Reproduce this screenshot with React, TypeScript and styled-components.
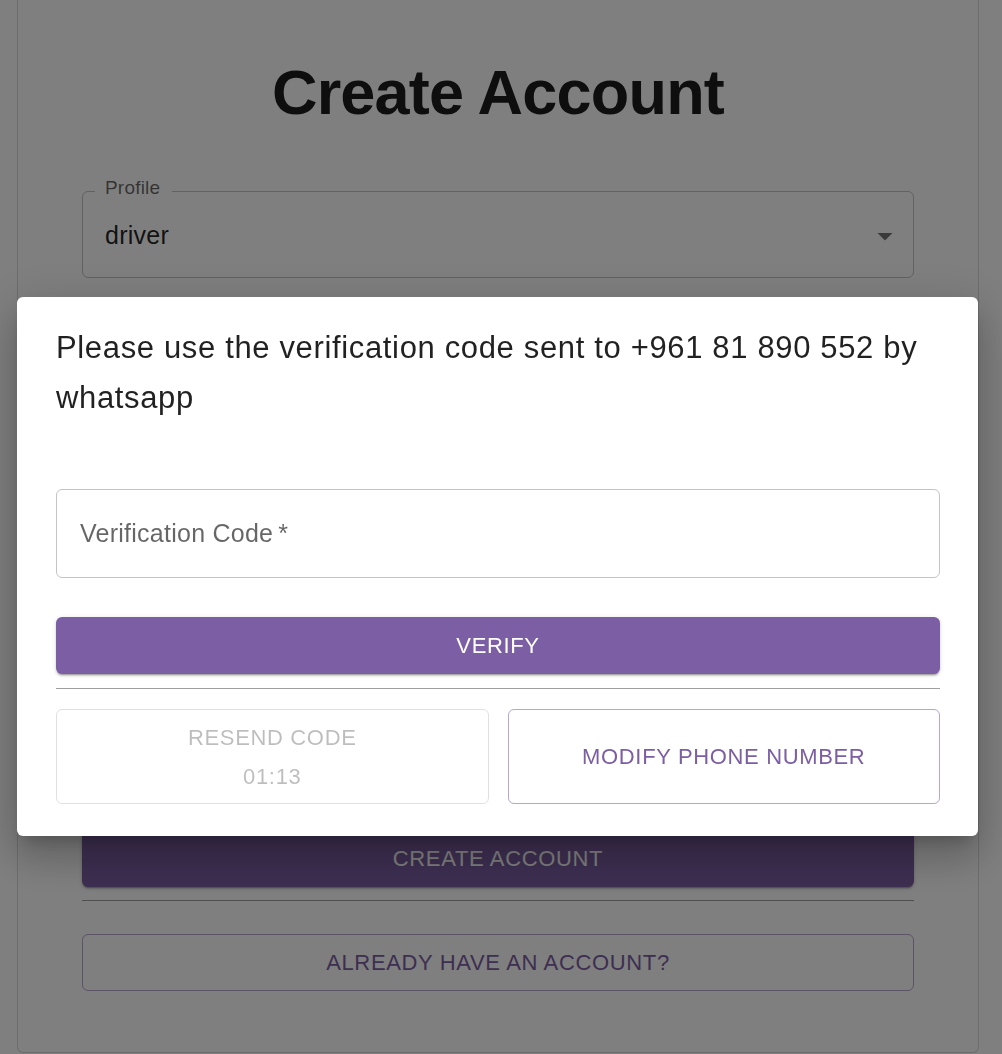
import React from "react";
import styled, { createGlobalStyle } from "styled-components";

const PURPLE = "#7b5ea3";

const GlobalStyle = createGlobalStyle`
  html, body {
    margin: 0;
    padding: 0;
    background: #ffffff;
    font-family: "Liberation Sans", Arial, Helvetica, sans-serif;
  }
  * { box-sizing: border-box; }
`;

const Page = styled.div`
  min-height: 100vh;
  padding-left: 17px;
  background: #ffffff;
`;

const Card = styled.main`
  width: 962px;
  background: #ffffff;
  border: 1px solid rgba(0, 0, 0, 0.14);
  border-top: none;
  border-radius: 0 0 6px 6px;
  padding: 55px 64px 61px;
  display: flex;
  flex-direction: column;
`;

const Title = styled.h1`
  margin: 0 0 49px;
  font-size: 63px;
  line-height: 74px;
  font-weight: 700;
  letter-spacing: -0.8px;
  text-align: center;
  color: #1c1c1c;
`;

const SelectBox = styled.fieldset`
  margin: 0;
  padding: 0 10px 0 12px;
  border: 1px solid rgba(0, 0, 0, 0.23);
  border-radius: 6px;
  min-width: 0;
`;

const SelectLegend = styled.legend`
  padding: 0 12px 6px 10px;
  font-size: 19px;
  line-height: 20px;
  letter-spacing: 0.2px;
  color: rgba(0, 0, 0, 0.6);
`;

const SelectRow = styled.div`
  height: 73px;
  padding: 0 0 10px 10px;
  display: flex;
  align-items: center;
  justify-content: space-between;
  font-size: 25px;
  letter-spacing: 0.25px;
  color: rgba(0, 0, 0, 0.87);
`;

const ArrowIcon = styled.svg`
  width: 36px;
  height: 36px;
  fill: rgba(0, 0, 0, 0.54);
`;

const OutlinedField = styled.div<{ $gap?: number }>`
  margin-top: ${(p) => p.$gap ?? 0}px;
  height: ${(p) => (p.$gap !== undefined ? 88 : 89)}px;
  border: 1px solid rgba(0, 0, 0, 0.23);
  border-radius: 6px;
  padding: 0 23px;
  display: flex;
  align-items: center;
  font-size: 25px;
  letter-spacing: 0.25px;
  color: rgba(0, 0, 0, 0.6);
`;

const Required = styled.span`
  margin-left: 5px;
`;

const ContainedButton = styled.button<{ $gap: number }>`
  margin-top: ${(p) => p.$gap}px;
  height: 57px;
  width: 100%;
  border: none;
  border-radius: 6px;
  background: ${PURPLE};
  color: #ffffff;
  font-family: inherit;
  font-size: 22px;
  letter-spacing: 0.65px;
  text-transform: uppercase;
  box-shadow: 0px 3px 1px -2px rgba(0, 0, 0, 0.2), 0px 2px 2px 0px rgba(0, 0, 0, 0.14),
    0px 1px 5px 0px rgba(0, 0, 0, 0.12);
  cursor: pointer;
`;

const Divider = styled.hr<{ $gap: number }>`
  margin: ${(p) => p.$gap}px 0 0;
  border: none;
  border-top: 1px solid #9e9e9e;
  height: 0;
  width: 100%;
`;

const OutlinedButton = styled.button<{ $gap?: number; $disabled?: boolean }>`
  margin-top: ${(p) => p.$gap ?? 0}px;
  width: 100%;
  min-height: 57px;
  padding: 7.5px 22px;
  border-radius: 6px;
  background: transparent;
  font-family: inherit;
  font-size: 22px;
  line-height: 39px;
  letter-spacing: 0.65px;
  text-transform: uppercase;
  display: flex;
  flex-direction: column;
  align-items: center;
  justify-content: center;
  border: 1px solid
    ${(p) => (p.$disabled ? "rgba(0, 0, 0, 0.12)" : "rgba(123, 94, 163, 0.55)")};
  color: ${(p) => (p.$disabled ? "rgba(0, 0, 0, 0.26)" : PURPLE)};
  cursor: ${(p) => (p.$disabled ? "default" : "pointer")};
`;

const Overlay = styled.div`
  position: fixed;
  inset: 0;
  background: rgba(0, 0, 0, 0.5);
  display: flex;
  align-items: flex-start;
  justify-content: flex-start;
  padding: 297px 0 0 17px;
`;

const Dialog = styled.div`
  width: 961px;
  background: #ffffff;
  border-radius: 6px;
  padding: 26px 38px 32px 39px;
  display: flex;
  flex-direction: column;
  box-shadow: 0px 11px 15px -7px rgba(0, 0, 0, 0.2), 0px 24px 38px 3px rgba(0, 0, 0, 0.14),
    0px 9px 46px 8px rgba(0, 0, 0, 0.12);
`;

const Message = styled.p`
  margin: 0 0 66px;
  font-size: 31px;
  line-height: 50px;
  letter-spacing: 0.65px;
  color: rgba(0, 0, 0, 0.87);
`;

const ButtonRow = styled.div`
  margin-top: 20px;
  display: grid;
  grid-template-columns: 1fr 1fr;
  gap: 19px;
`;

const hiddenFields = ["first-name", "last-name", "phone", "password"];

export default function App() {
  return (
    <>
      <GlobalStyle />
      <Page>
        <Card>
          <Title>Create Account</Title>
          <SelectBox>
            <SelectLegend>Profile</SelectLegend>
            <SelectRow>
              <span>driver</span>
              <ArrowIcon viewBox="0 0 24 24" aria-hidden="true">
                <path d="M7 10l5 5 5-5z" />
              </ArrowIcon>
            </SelectRow>
          </SelectBox>
          {hiddenFields.map((f) => (
            <OutlinedField key={f} $gap={36} aria-label={f} />
          ))}
          <ContainedButton $gap={56}>Create Account</ContainedButton>
          <Divider $gap={13} />
          <OutlinedButton $gap={33}>Already have an account?</OutlinedButton>
        </Card>
      </Page>
      <Overlay>
        <Dialog role="dialog">
          <Message>Please use the verification code sent to +961 81 890 552 by whatsapp</Message>
          <OutlinedField>
            Verification Code
            <Required>*</Required>
          </OutlinedField>
          <ContainedButton $gap={39}>Verify</ContainedButton>
          <Divider $gap={14} />
          <ButtonRow>
            <OutlinedButton $disabled>
              <span>Resend code</span>
              <span>01:13</span>
            </OutlinedButton>
            <OutlinedButton>Modify phone number</OutlinedButton>
          </ButtonRow>
        </Dialog>
      </Overlay>
    </>
  );
}
